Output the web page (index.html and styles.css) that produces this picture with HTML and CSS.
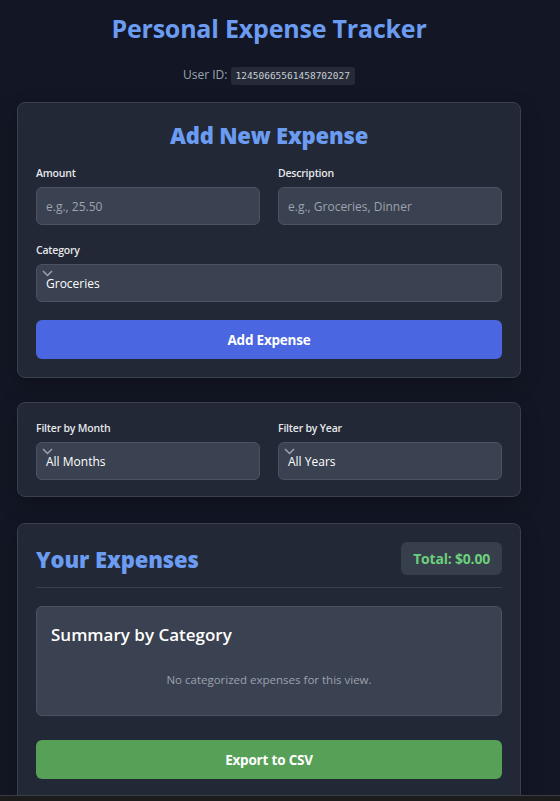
FILE: index.html
```html
<!DOCTYPE html>
<html lang="en">
<head>
<meta charset="utf-8">
<title>Personal Expense Tracker</title>
<link rel="stylesheet" href="styles.css">
</head>
<body>
<div class="page">
  <h1 class="title">Personal Expense Tracker</h1>
  <p class="user">User ID: <code class="uid">12450665561458702027</code></p>

  <section class="card card-add">
    <h2 class="card-title">Add New Expense</h2>
    <div class="grid2">
      <div class="field">
        <label class="label">Amount</label>
        <div class="input placeholder">e.g., 25.50</div>
      </div>
      <div class="field">
        <label class="label">Description</label>
        <div class="input placeholder">e.g., Groceries, Dinner</div>
      </div>
    </div>
    <div class="field">
      <label class="label">Category</label>
      <div class="input select">
        <svg class="chev" width="11" height="7" viewBox="0 0 11 7"><path d="M1 1l4.5 4.5L10 1" fill="none" stroke="#9ca3af" stroke-width="1.5"/></svg>
        <span>Groceries</span>
      </div>
    </div>
    <button class="btn btn-blue">Add Expense</button>
  </section>

  <section class="card card-filter">
    <div class="grid2">
      <div class="field">
        <label class="label">Filter by Month</label>
        <div class="input select">
          <svg class="chev" width="11" height="7" viewBox="0 0 11 7"><path d="M1 1l4.5 4.5L10 1" fill="none" stroke="#9ca3af" stroke-width="1.5"/></svg>
          <span>All Months</span>
        </div>
      </div>
      <div class="field">
        <label class="label">Filter by Year</label>
        <div class="input select">
          <svg class="chev" width="11" height="7" viewBox="0 0 11 7"><path d="M1 1l4.5 4.5L10 1" fill="none" stroke="#9ca3af" stroke-width="1.5"/></svg>
          <span>All Years</span>
        </div>
      </div>
    </div>
  </section>

  <section class="card card-last">
    <div class="exp-head">
      <h2 class="exp-title">Your Expenses</h2>
      <div class="total">Total: $0.00</div>
    </div>
    <div class="summary">
      <h3 class="sum-title">Summary by Category</h3>
      <p class="sum-empty">No categorized expenses for this view.</p>
    </div>
    <button class="btn btn-green">Export to CSV</button>
  </section>
</div>
<div class="hscroll"></div>
</body>
</html>
```

FILE: styles.css
```css
html, body {
  margin: 0;
  padding: 0;
  background: #131725;
  height: 100%;
  overflow: hidden;
}
body {
  font-family: "Open Sans", "Noto Sans", sans-serif;
  color: #e5e7eb;
}
.page {
  width: 504px;
  margin-left: 17px;
  padding-top: 12px;
}
.title {
  margin: 0;
  text-align: center;
  font-size: 25px;
  font-weight: 700;
  color: #6b9cf2;
  line-height: 32px;
  letter-spacing: -0.2px;
}
.user {
  margin: 22px 0 0;
  text-align: center;
  font-size: 12px;
  color: #9ca3af;
  line-height: 18px;
}
.uid {
  display: inline-block;
  font-family: "DejaVu Sans Mono", monospace;
  font-size: 9.5px;
  background: #252b37;
  color: #c8cdd6;
  padding: 0 5px;
  line-height: 18px;
  border-radius: 3px;
}
.card {
  margin-top: 17px;
  background: #222835;
  border: 1px solid #394050;
  border-radius: 8px;
  padding: 18px;
  box-shadow: 0 8px 20px rgba(0,0,0,0.25);
}
.card-add { padding-bottom: 18px; }
.card-filter { margin-top: 24px; padding: 18px 18px 16px; }
.card-filter .field { margin-bottom: 0; }
.card-last { margin-top: 26px; padding-top: 18px; padding-bottom: 40px; }
.card-title {
  margin: 0 0 17px;
  text-align: center;
  font-size: 22px;
  font-weight: 800;
  color: #6b9cf2;
  line-height: 28px;
  letter-spacing: -0.2px;
}
.grid2 {
  display: grid;
  grid-template-columns: 1fr 1fr;
  column-gap: 18px;
}
.field { display: flex; flex-direction: column; margin-bottom: 18px; }
.label {
  font-size: 10.5px;
  font-weight: 600;
  color: #e5e7eb;
  line-height: 14px;
  margin-bottom: 7px;
  letter-spacing: -0.2px;
}
.input {
  position: relative;
  height: 38px;
  box-sizing: border-box;
  background: #3a4150;
  border: 1px solid #4b5263;
  border-radius: 6px;
  display: flex;
  align-items: center;
  padding: 0 9px;
  font-size: 12px;
  color: #f3f4f6;
}
.placeholder { color: #9ca3af; }
.select span { color: #ffffff; }
.chev {
  position: absolute;
  left: 5px;
  top: 5px;
}
.btn {
  display: block;
  width: 100%;
  height: 39px;
  border: 0;
  border-radius: 6px;
  font-family: "Open Sans", "Noto Sans", sans-serif;
  font-size: 13.5px;
  font-weight: 700;
  color: #ffffff;
  letter-spacing: -0.2px;
}
.btn-blue { background: #4a66e0; }
.btn-green { background: #57a057; }
.card-last .btn { margin-top: 24px; }
.exp-head {
  display: flex;
  justify-content: space-between;
  align-items: center;
  padding-bottom: 12px;
  border-bottom: 1px solid #394050;
}
.exp-title {
  margin: 0;
  font-size: 22px;
  font-weight: 800;
  color: #6b9cf2;
  line-height: 28px;
  letter-spacing: -0.1px;
}
.total {
  background: #373e4c;
  color: #6ccf7c;
  font-weight: 700;
  font-size: 14px;
  padding: 0 12px;
  height: 33px;
  line-height: 33px;
  border-radius: 6px;
  letter-spacing: -0.2px;
}
.summary {
  margin-top: 18px;
  background: #3a4150;
  border: 1px solid #4b5263;
  border-radius: 6px;
  padding: 16px 14px 27px;
}
.sum-title {
  margin: 0;
  font-size: 17px;
  font-weight: 600;
  color: #ffffff;
  line-height: 24px;
}
.sum-empty {
  margin: 25px 0 0;
  text-align: center;
  font-size: 11.5px;
  color: #9ca3af;
  line-height: 16px;
}
.hscroll {
  position: fixed;
  left: 0;
  right: 0;
  bottom: 0;
  height: 5px;
  background: #1c1c1c;
  border-top: 1px solid #3a3d44;
}
```
